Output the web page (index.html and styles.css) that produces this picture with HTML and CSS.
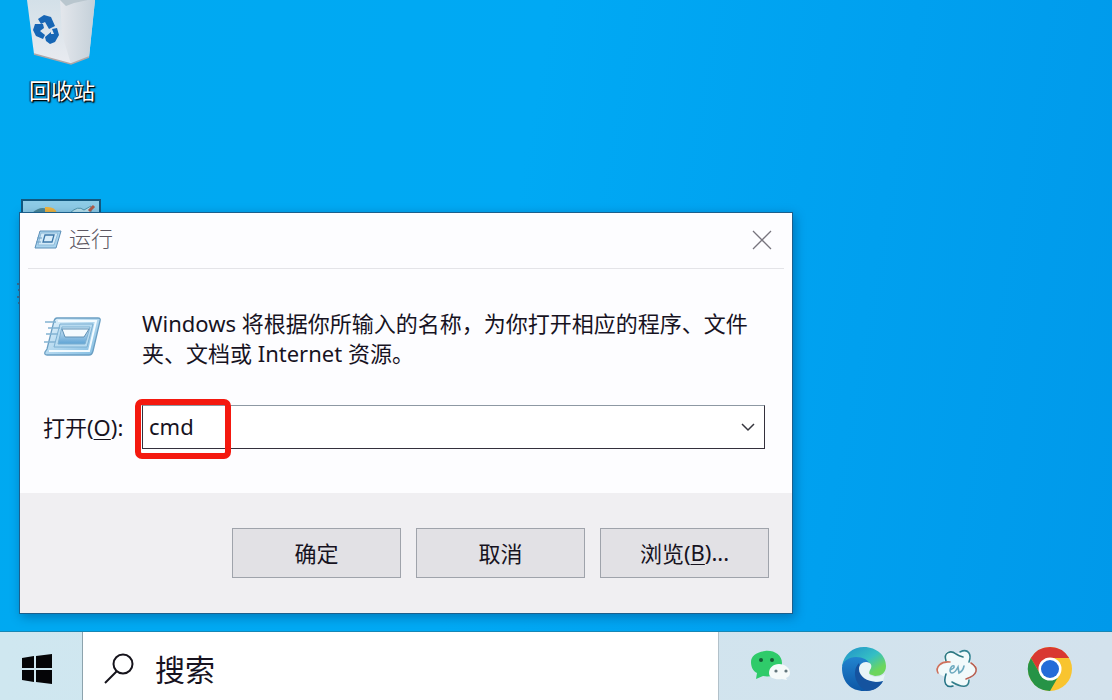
FILE: index.html
```html
<!DOCTYPE html>
<html lang="zh-CN">
<head>
  <meta charset="UTF-8" />
  <meta name="viewport" content="width=device-width, initial-scale=1.0" />
  <title>运行</title>
  <link rel="stylesheet" href="styles.css">
</head>
<body>
  <main class="desktop">
    <div class="desktop-icon bin">
      <svg width="84" height="70" viewBox="0 0 84 70">
        <defs>
          <linearGradient id="binLeft" x1="0" y1="0" x2="0" y2="1">
            <stop offset="0" stop-color="#d3e0e8" />
            <stop offset="1" stop-color="#e9ebf0" />
          </linearGradient>
          <linearGradient id="binRight" x1="0" y1="0" x2="1" y2="0">
            <stop offset="0" stop-color="#e4e7ec" />
            <stop offset="1" stop-color="#c4d0d9" />
          </linearGradient>
        </defs>
        <path d="M7 0H75L69 57L51 64L14 54Z" fill="url(#binLeft)" />
        <path d="M40 0H75L69 57L51 64L42 34Z" fill="url(#binRight)" />
        <path d="M40 0L46 6L54 3L68 0Z" fill="#b9c6ce" />
        <path d="M14 54L51 64L69 57" fill="none" stroke="#b0a7a8" stroke-width="1.5" />
        <g fill="#1766b5">
          <path d="M18 19L24 15L31 17L35 26L29 29L25 22L21 24Z" />
          <path d="M15 24L23 24L24 28L20 31L25 35L23 39L16 36L13 30Z" />
          <path d="M25 37L31 32V34H34L32 29L37 28L39 35L35 42L30 44L26 41Z" />
        </g>
      </svg>
      <span>回收站</span>
    </div>
    <div class="desktop-icon panel">
      <svg width="84" height="110" viewBox="0 0 84 110">
        <rect x="2" y="1" width="78" height="60" fill="#8dcbe6" stroke="#12587f" stroke-width="2" />
        <path d="M12 14Q20 7 27 10V14Z" fill="#4a8797" />
        <path d="M25 8Q35 7 37 14H25Z" fill="#f0b33c" />
        <path d="M50 14Q58 6 64 11L71 7V14Z" fill="#b9e2ec" stroke="#5095ae" />
        <path d="M69 12L74 7" stroke="#b05a48" stroke-width="3" />
        <path d="M-3 85H1M-2 91H1M-3 98H1M-2 104H1" stroke="#386f91" stroke-width="2" />
      </svg>
    </div>

    <section class="run-window" role="dialog" aria-labelledby="run-title">
      <header class="title-bar">
        <svg width="28" height="20" viewBox="0 0 28 20">
          <path d="M6 1H27L22 18H1Z" fill="#a9d4ee" stroke="#5b8fb8" stroke-width="1" />
          <path d="M7 3H24L20 15H4Z" fill="#d3eaf8" stroke="#8fbbda" />
          <path d="M11 5H20L18 12H9Z" fill="#d9eefb" stroke="#3d77a8" stroke-width="1.3" />
          <path d="M3 8H8M2 12H7" stroke="#6d9fc6" />
        </svg>
        <h1 id="run-title">运行</h1>
        <button class="close" type="button" aria-label="关闭">
          <svg width="20" height="20" viewBox="0 0 20 20">
            <path d="M1 1L19 19M19 1L1 19" stroke="#77747d" stroke-width="1.3" />
          </svg>
        </button>
      </header>

      <div class="content">
        <div class="intro">
          <svg width="60" height="42" viewBox="0 0 60 42">
            <defs>
              <linearGradient id="runFrame" x1="0" y1="0" x2="1" y2="1">
                <stop offset="0" stop-color="#e7f5fd" />
                <stop offset="1" stop-color="#7fbbe1" />
              </linearGradient>
              <linearGradient id="runInner" x1="0" y1="0" x2="0" y2="1">
                <stop offset="0" stop-color="#d5ebf8" />
                <stop offset="1" stop-color="#5fa3d4" />
              </linearGradient>
            </defs>
            <path d="M14 1H55Q58 1 57 4L50 34Q49 38 46 38H4Q1 38 2 35L4 32L11 4Q12 1 14 1Z" fill="url(#runFrame)" stroke="#6b9fc3" stroke-width="1.3" />
            <path d="M15 4H53L46 34H6" fill="none" stroke="#f3fbff" stroke-width="2" />
            <path d="M17 7H50L44 30H11Z" fill="#b8dbf0" stroke="#7db0d2" />
            <path d="M19 10H47L42 27H15Z" fill="url(#runInner)" stroke="#7db0d2" />
            <path d="M19 12H46L41 20H22Z" fill="#f5fbfe" stroke="#5e90b4" />
            <path d="M2 5H13M5 11H17M3 17H15M1 25H12" stroke="#82b2d2" stroke-width="1.4" />
          </svg>
          <p>Windows 将根据你所输入的名称，为你打开相应的程序、文件夹、文档或 Internet 资源。</p>
        </div>
        <div class="open-row">
          <label for="command">打开(<u>O</u>):</label>
          <div class="combo">
            <input id="command" type="text" value="cmd" autocomplete="off" spellcheck="false">
            <button class="arrow" type="button" aria-label="历史记录">
              <svg width="14" height="8" viewBox="0 0 14 8">
                <path d="M1 1L7 7L13 1" fill="none" stroke="#36363e" stroke-width="1.5" />
              </svg>
            </button>
            <span class="highlight"></span>
          </div>
        </div>
      </div>

      <footer class="actions">
        <button type="button">确定</button>
        <button type="button">取消</button>
        <button type="button">浏览(<u>B</u>)...</button>
      </footer>
    </section>
  </main>

  <nav class="taskbar">
    <button class="start" type="button" aria-label="开始">
      <svg width="32" height="32" viewBox="0 0 32 32">
        <path d="M1 5L13 3V15H1ZM15 3L31 1V15H15ZM1 17H13V29L1 27ZM15 17H31V31L15 29Z" fill="#050507" />
      </svg>
    </button>
    <div class="search">
      <svg width="32" height="32" viewBox="0 0 32 32">
        <circle cx="20" cy="11" r="9.5" fill="none" stroke="#15131b" stroke-width="2" />
        <path d="M14 18L2 30" stroke="#15131b" stroke-width="2" />
      </svg>
      <input type="text" placeholder="搜索" aria-label="搜索">
    </div>
    <div class="apps">
      <button type="button" aria-label="微信">
        <svg width="44" height="44" viewBox="0 0 44 44">
          <path d="M16 4C25 3 33 8 33 16C33 25 25 31 14 29L7 32L8 26C4 24 2 20 2 15C2 9 7 5 16 4Z" fill="#2fcb6a" />
          <path d="M30 17C36 17 41 21 41 26C41 29 39 30 37 31L38 33L33 32C26 33 20 31 20 26C20 21 24 17 30 17Z" fill="#f5fafa" />
          <circle cx="12" cy="13" r="2" fill="#145c35" />
          <circle cx="23" cy="13" r="2" fill="#145c35" />
          <circle cx="27" cy="24" r="1.6" fill="#63767c" />
          <circle cx="37" cy="24" r="1.6" fill="#63767c" />
        </svg>
      </button>
      <button type="button" aria-label="Microsoft Edge">
        <svg width="46" height="46" viewBox="0 0 46 46">
          <defs>
            <linearGradient id="edgeTop" x1="0" y1="0" x2="1" y2="1">
              <stop offset=".1" stop-color="#2398c9" />
              <stop offset=".5" stop-color="#35bfc4" />
              <stop offset=".8" stop-color="#6dd65c" />
            </linearGradient>
            <linearGradient id="edgeBlue" x1="0" y1="0" x2="0" y2="1">
              <stop offset="0" stop-color="#2284cf" />
              <stop offset="1" stop-color="#0c56a5" />
            </linearGradient>
          </defs>
          <path d="M1 20C3 8 12 1 23 1C36 1 45 10 45 20C45 27 40 30 34 30L22 26L14 14Z" fill="url(#edgeTop)" />
          <path d="M1 22C1 15 8 11 15 11C22 11 27 14 29 18L22 24L34 36L42 35C38 42 31 45 23 45C10 45 1 36 1 22Z" fill="url(#edgeBlue)" />
          <path d="M18 17C11 24 13 38 25 45C33 45 39 41 42 35C33 38 24 33 20 25Z" fill="#15539f" />
          <path d="M25 16C30 16 32 20 29 24C27 28 29 30 34 31C38 31 41 30 44 28L42 35C30 38 18 32 18 23C18 19 21 16 25 16Z" fill="#e7f4f7" />
        </svg>
      </button>
      <button type="button" aria-label="EV录屏">
        <svg width="44" height="44" viewBox="0 0 44 44">
          <g fill="#f1fafb">
            <ellipse cx="22" cy="22" rx="20" ry="10" />
            <ellipse cx="22" cy="22" rx="20" ry="10" transform="rotate(60 22 22)" />
            <ellipse cx="22" cy="22" rx="20" ry="10" transform="rotate(120 22 22)" />
          </g>
          <g fill="none" stroke-width="1.6" stroke-linecap="round">
            <path d="M11 14C8 5 16 3 21 7Q24 9 28 10" stroke="#2c7882" />
            <path d="M25 5C33 1 37 7 34 15" stroke="#338492" />
            <path d="M36 16C44 21 43 28 31 32" stroke="#b85f51" />
            <path d="M34 33C34 41 27 41 17 35" stroke="#337f8c" />
            <path d="M18 39C11 41 8 36 11 27" stroke="#257386" />
            <path d="M3 26C0 20 6 14 15 15" stroke="#ce715c" />
            <path d="M15 23Q20 21 19 19C16 17 13 26 17 26Q20 26 23 20L24 26Q28 24 29 19" stroke="#6daabf" />
          </g>
        </svg>
      </button>
      <button type="button" aria-label="Google Chrome">
        <svg width="46" height="46" viewBox="0 0 46 46">
          <circle cx="23" cy="23" r="22" fill="#f8c42f" />
          <path d="M3.9 12A22 22 0 0 1 42.1 12H23L13.5 28.5Z" fill="#d93831" />
          <path d="M3.9 12A22 22 0 0 0 23 45L32.5 28.5L13.5 28.5Z" fill="#269346" />
          <circle cx="23" cy="23" r="11.5" fill="#fff" />
          <circle cx="23" cy="23" r="9" fill="#256bd8" />
        </svg>
      </button>
    </div>
  </nav>
</body>
</html>
```
FILE: styles.css
```css
* {
  box-sizing: border-box;
}
body {
  margin: 0;
  min-height: 100vh;
  display: flex;
  flex-direction: column;
  font-family: "Noto Sans", "Noto Sans CJK SC", sans-serif;
  font-size: 22px;
  color: #17131f;
}
svg {
  display: block;
  flex-shrink: 0;
  overflow: visible;
}
button,
input {
  font: inherit;
  color: inherit;
}
button {
  display: flex;
  align-items: center;
  justify-content: center;
  padding: 0;
  border: none;
  background: none;
}
u {
  text-decoration-thickness: 1px;
  text-underline-offset: 3px;
}

/* desktop */
.desktop {
  position: relative;
  flex: 1;
  overflow: hidden;
  background: linear-gradient(100deg, #00a9f0 0%, #00a9f4 45%, #00a0ef 75%, #0099ea 100%);
}
.desktop-icon {
  position: absolute;
  left: 20px;
  width: 84px;
  display: flex;
  flex-direction: column;
  align-items: center;
  color: #fff;
  line-height: 32px;
  text-shadow: 1px 1px 2px #000, 1px 1px 1px #000, -1px 0 1px #124;
}
.bin {
  top: 0;
  gap: 4px;
}
.panel {
  top: 199px;
}

/* run dialog */
.run-window {
  position: absolute;
  left: 19px;
  top: 212px;
  width: 774px;
  max-width: calc(100% - 38px);
  background: #fdfdff;
  border: 1px solid #1c5f8c;
  box-shadow: 2px 3px 10px rgba(0, 50, 100, 0.4);
}
.title-bar {
  display: flex;
  align-items: center;
  gap: 7px;
  height: 56px;
  margin: 0 8px;
  padding: 0 12px 2px 6px;
  border-bottom: 1px solid #e4e4e8;
}
.title-bar h1 {
  margin: 0;
  font-size: 22px;
  line-height: 28px;
  padding-bottom: 3px;
  font-weight: 300;
  color: #5c5763;
}
.close {
  margin-left: auto;
}
.content {
  padding: 39px 27px 44px 23px;
}
.intro {
  display: flex;
  align-items: center;
  gap: 39px;
  margin-bottom: 37px;
}
.intro p {
  margin: 0;
  line-height: 30px;
}
.open-row {
  display: flex;
  align-items: center;
}
.open-row label {
  width: 99px;
  padding-bottom: 2px;
  white-space: nowrap;
}
.combo {
  position: relative;
  flex: 1;
  display: flex;
  height: 44px;
  background: #fff;
  border: 1px solid #34303c;
  border-top-color: #8d98a3;
}
.combo input {
  flex: 1;
  min-width: 0;
  padding: 0 6px 2px;
  border: none;
  outline: none;
  background: none;
}
.arrow {
  width: 32px;
}
.highlight {
  position: absolute;
  left: -8px;
  top: -7px;
  width: 96px;
  height: 60px;
  border: 6px solid #f4190f;
  border-radius: 7px;
  pointer-events: none;
}
.actions {
  display: flex;
  justify-content: flex-end;
  gap: 15px;
  padding: 35px 23px;
  background: #f0eff2;
}
.actions button {
  width: 169px;
  height: 50px;
  padding-bottom: 2px;
  background: #e2e1e5;
  border: 1px solid #9fa3ab;
}

/* taskbar */
.taskbar {
  display: flex;
  height: 69px;
  background: linear-gradient(90deg, #cfe7f0, #d3e2ed);
  border-top: 1px solid #1687b5;
}
.start {
  width: 83px;
  padding: 6px 9px 0 0;
  border-right: 1px solid #8da3ad;
}
.search {
  flex: 0 1 636px;
  display: flex;
  align-items: center;
  gap: 20px;
  padding: 6px 20px 0;
  background: #fff;
  border-right: 1px solid #b2c1ca;
}
.search input {
  flex: 1;
  min-width: 0;
  padding: 0;
  border: none;
  outline: none;
  background: none;
  font-size: 30px;
}
.search input::placeholder {
  color: #17131f;
  opacity: 1;
}
.apps {
  display: flex;
  margin-left: 5px;
  padding-top: 6px;
}
.apps button {
  width: 93px;
}
```
